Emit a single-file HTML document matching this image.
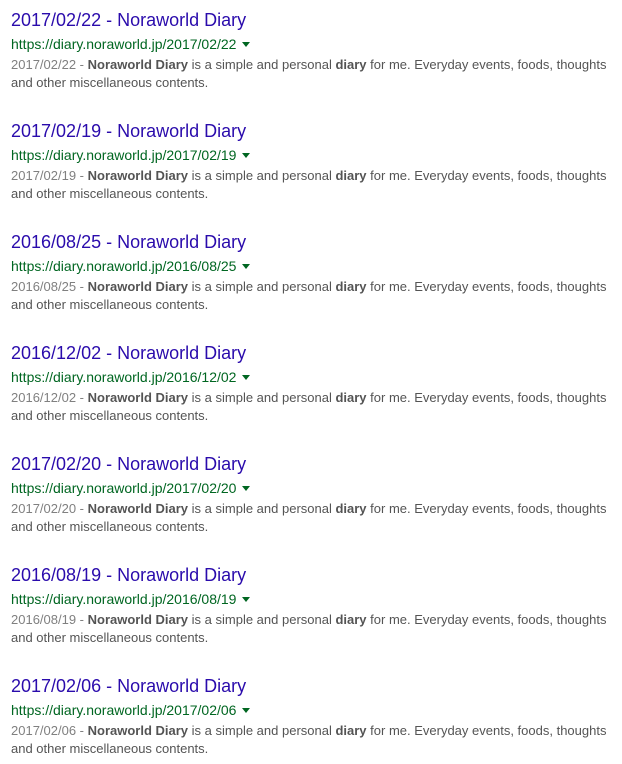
<!DOCTYPE html>
<html><head><meta charset="utf-8"><style>
body{margin:0;width:622px;height:764px;background:#fff;font-family:"Liberation Sans",Arial,sans-serif;position:relative;overflow:hidden}
.r{position:absolute;left:11px;width:600px}
.t{position:absolute;top:0;left:0;font-size:18px;line-height:20px;color:#2a0bac;white-space:nowrap}
.u{position:absolute;top:25px;left:0;font-size:14px;line-height:18px;color:#006621;white-space:nowrap}
.u i{display:inline-block;width:0;height:0;border-left:4px solid transparent;border-right:4px solid transparent;border-top:5px solid #006621;margin-left:6px;vertical-align:2px}
.s{position:absolute;top:46px;left:0;font-size:13px;line-height:18px;color:#545454;width:600px}
.s span{color:#808080}
</style></head><body>
<div class="r" style="top:10px"><div class="t">2017/02/22 - Noraworld Diary</div><div class="u">https://diary.noraworld.jp/2017/02/22<i></i></div><div class="s"><span>2017/02/22 - </span><b>Noraworld Diary</b> is a simple and personal <b>diary</b> for me. Everyday events, foods, thoughts and other miscellaneous contents.</div></div>
<div class="r" style="top:121px"><div class="t">2017/02/19 - Noraworld Diary</div><div class="u">https://diary.noraworld.jp/2017/02/19<i></i></div><div class="s"><span>2017/02/19 - </span><b>Noraworld Diary</b> is a simple and personal <b>diary</b> for me. Everyday events, foods, thoughts and other miscellaneous contents.</div></div>
<div class="r" style="top:232px"><div class="t">2016/08/25 - Noraworld Diary</div><div class="u">https://diary.noraworld.jp/2016/08/25<i></i></div><div class="s"><span>2016/08/25 - </span><b>Noraworld Diary</b> is a simple and personal <b>diary</b> for me. Everyday events, foods, thoughts and other miscellaneous contents.</div></div>
<div class="r" style="top:343px"><div class="t">2016/12/02 - Noraworld Diary</div><div class="u">https://diary.noraworld.jp/2016/12/02<i></i></div><div class="s"><span>2016/12/02 - </span><b>Noraworld Diary</b> is a simple and personal <b>diary</b> for me. Everyday events, foods, thoughts and other miscellaneous contents.</div></div>
<div class="r" style="top:454px"><div class="t">2017/02/20 - Noraworld Diary</div><div class="u">https://diary.noraworld.jp/2017/02/20<i></i></div><div class="s"><span>2017/02/20 - </span><b>Noraworld Diary</b> is a simple and personal <b>diary</b> for me. Everyday events, foods, thoughts and other miscellaneous contents.</div></div>
<div class="r" style="top:565px"><div class="t">2016/08/19 - Noraworld Diary</div><div class="u">https://diary.noraworld.jp/2016/08/19<i></i></div><div class="s"><span>2016/08/19 - </span><b>Noraworld Diary</b> is a simple and personal <b>diary</b> for me. Everyday events, foods, thoughts and other miscellaneous contents.</div></div>
<div class="r" style="top:676px"><div class="t">2017/02/06 - Noraworld Diary</div><div class="u">https://diary.noraworld.jp/2017/02/06<i></i></div><div class="s"><span>2017/02/06 - </span><b>Noraworld Diary</b> is a simple and personal <b>diary</b> for me. Everyday events, foods, thoughts and other miscellaneous contents.</div></div>
</body></html>
